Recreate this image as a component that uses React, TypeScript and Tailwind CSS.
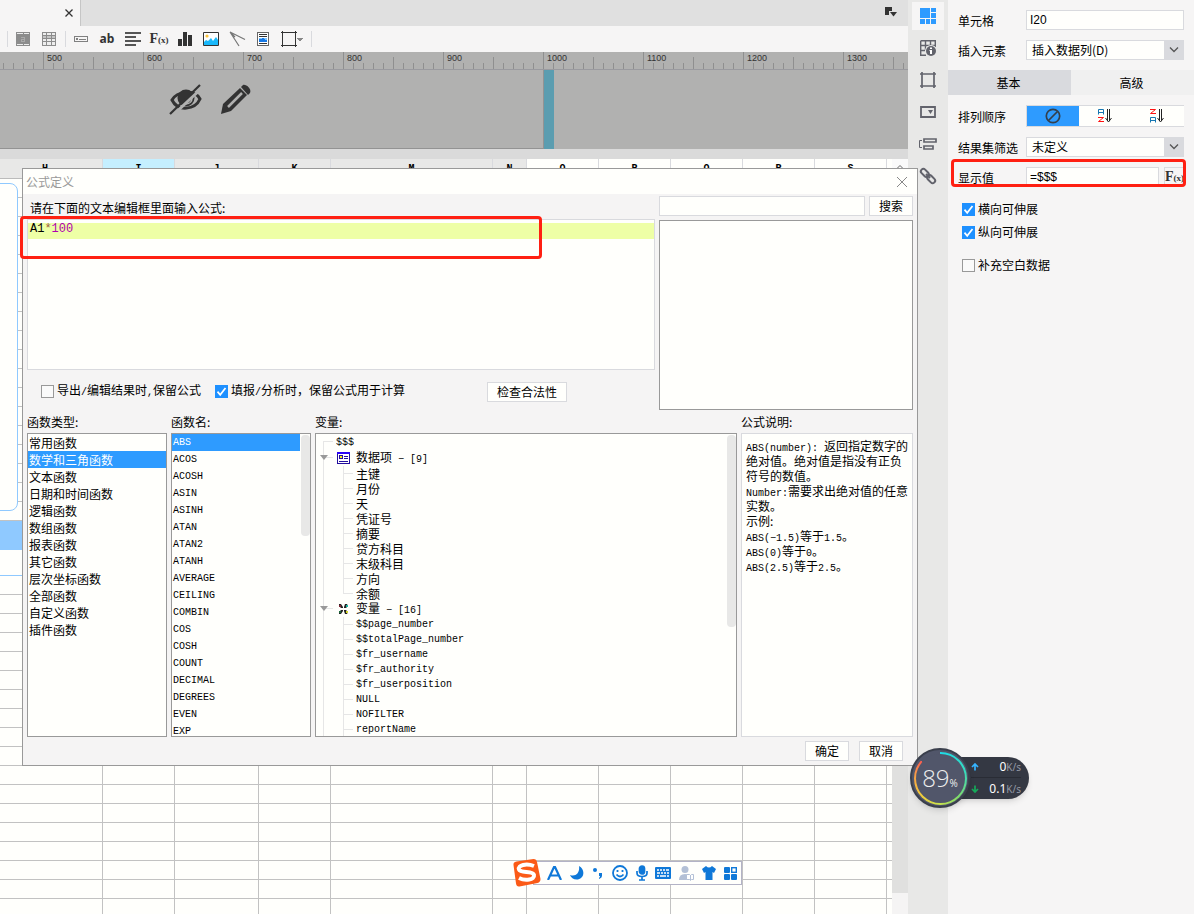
import { useState } from "react";
import type { ReactNode } from "react";

const columns = [
  { name: "H", width: 103, tone: "gray" },
  { name: "I", width: 72, tone: "blue" },
  { name: "J", width: 84, tone: "gray" },
  { name: "K", width: 72, tone: "gray" },
  { name: "M", width: 162, tone: "gray" },
  { name: "N", width: 34, tone: "gray" },
  { name: "O", width: 72, tone: "white" },
  { name: "P", width: 72, tone: "white" },
  { name: "Q", width: 72, tone: "white" },
  { name: "R", width: 72, tone: "white" },
  { name: "S", width: 72, tone: "white" },
  { name: "", width: 5, tone: "white" },
];

const headTone: Record<string, string> = {
  gray: "bg-[#e8e8e7]",
  blue: "bg-[#c5efff]",
  white: "bg-[#fffffc]",
};

const categories = [
  "常用函数", "数学和三角函数", "文本函数", "日期和时间函数", "逻辑函数", "数组函数",
  "报表函数", "其它函数", "层次坐标函数", "全部函数", "自定义函数", "插件函数",
];

const functionNames = [
  "ABS", "ACOS", "ACOSH", "ASIN", "ASINH", "ATAN", "ATAN2", "ATANH", "AVERAGE",
  "CEILING", "COMBIN", "COS", "COSH", "COUNT", "DECIMAL", "DEGREES", "EVEN", "EXP",
];

const dataItems = ["主键", "月份", "天", "凭证号", "摘要", "贷方科目", "末级科目", "方向", "余额"];

const variables = [
  "$$page_number", "$$totalPage_number", "$fr_username", "$fr_authority",
  "$fr_userposition", "NULL", "NOFILTER", "reportName",
];

const rulerMarks = ["", "500", "600", "700", "800", "900", "1000", "1100", "1200", "1300"];
const minorTicks = [10, 20, 30, 40, 60, 70, 80, 90];

function Latin({ children }: { children: ReactNode }) {
  return <span className="whitespace-pre font-['Liberation_Mono',monospace] text-[10px]">{children}</span>;
}

function Check({ label, defaultChecked, children }: { label: string; defaultChecked?: boolean; children?: ReactNode }) {
  return (
    <label className="flex items-center gap-[3px] whitespace-nowrap">
      <span className="grid size-[13px]">
        <input
          type="checkbox"
          aria-label={label}
          defaultChecked={defaultChecked}
          className="peer col-start-1 row-start-1 size-[13px] appearance-none border border-[#999] bg-[#fafafa] checked:border-[#1e90ff] checked:bg-[#1e90ff]"
        />
        <svg viewBox="0 0 13 13" className="pointer-events-none col-start-1 row-start-1 hidden size-[13px] peer-checked:block">
          <path d="M2.500 6.600 5.200 9.800 10.500 3" fill="none" stroke="#fff" strokeWidth="1.700" />
        </svg>
      </span>
      <span>{children ?? label}</span>
    </label>
  );
}

function FxGlyph() {
  return (
    <span className="flex shrink-0 items-baseline leading-none text-[#333]">
      <span className="font-['Liberation_Serif',serif] text-sm font-bold">F</span>
      <span className="font-['Liberation_Serif',serif] text-[9px] font-bold">(x)</span>
    </span>
  );
}

function Separator() {
  return <span className="ml-[3px] mr-[2px] h-4 w-px bg-[#d9dade]" />;
}

function Tool({ label, wide, children }: { label: string; wide?: boolean; children: ReactNode }) {
  return (
    <button aria-label={label} className={`flex h-[26px] items-center justify-center ${wide ? "w-8" : "w-[26px]"}`}>
      {children}
    </button>
  );
}

function Toolbar() {
  return (
    <div className="flex h-[26px] items-center bg-[#f6f5f5] pl-1">
      <Separator />
      <Tool label="合并单元格">
        <svg width="14" height="14" shapeRendering="crispEdges">
          <path d="M0 0h14v14H0z" fill="#8c8c8c" />
          <path d="M1 1h6v1H1zM8 1h5v1H8zM1 12h6v1H1zM8 12h5v1H8z" fill="#ededed" />
          <path d="M5 5h4v5H5V7h3V6H5zM6 9h2V8H6z" fill="#a9a9a9" />
        </svg>
      </Tool>
      <Tool label="拆分单元格">
        <svg width="14" height="14" shapeRendering="crispEdges">
          <path d="M0 0h14v14H0z" fill="#8c8c8c" />
          <path d="M1 1h3v2H1zM5 1h4v2H5zM10 1h3v2h-3zM1 7h3v2H1zM5 7h4v2H5zM10 7h3v2h-3zM1 10h3v3H1zM5 10h4v3H5zM10 10h3v3h-3z" fill="#ededed" />
          <path d="M1 4h3v2H1zM5 4h4v2H5zM10 4h3v2h-3z" fill="#c4c4c4" />
        </svg>
      </Tool>
      <Separator />
      <Tool label="数据列">
        <svg width="14" height="6" shapeRendering="crispEdges" fill="none" stroke="#808080">
          <path d="M.5.5h13v5H.5zM2.5 2.5h1v1h-1zM5 3.5h7" />
        </svg>
      </Tool>
      <Tool label="文本">
        <span className="font-['Noto_Sans',sans-serif] text-xs font-bold leading-4 text-[#333]">ab</span>
      </Tool>
      <Tool label="富文本">
        <svg width="16" height="14" shapeRendering="crispEdges" fill="#555">
          <path d="M0 0h16v2H0zM0 4h11v2H0zM0 8h16v2H0zM0 12h11v2H0z" />
        </svg>
      </Tool>
      <Tool label="公式"><FxGlyph /></Tool>
      <Tool label="图表">
        <svg width="14" height="14" shapeRendering="crispEdges" fill="#333">
          <path d="M0 7h4v7H0zM5 0h4v14H5zM10 3h4v11h-4z" />
        </svg>
      </Tool>
      <Tool label="图片">
        <svg width="16" height="14">
          <path d="M.5.5h15v13H.5z" fill="#fff" stroke="#333" />
          <circle cx="4" cy="4" r="1.6" fill="#f9c23c" />
          <path d="M1 13v-3l2-2 2 1 3-3 2 3 3-4 2 3v5z" fill="#19b8fa" />
        </svg>
      </Tool>
      <Tool label="斜线">
        <svg width="17" height="16" fill="none" stroke="#777" strokeWidth="1.200">
          <path d="M1 1 16 8.5M1 1l9 14M1 1l5 5" />
        </svg>
      </Tool>
      <Tool label="子报表">
        <svg width="12" height="14" shapeRendering="crispEdges">
          <path d="M.5.5h11v13H.5z" fill="#fff" stroke="#666" />
          <path d="M2 2h8v1H2zM2 4h8v1H2zM2 11h8v1H2z" fill="#333" />
          <path d="M2 6h8v4H2z" fill="#1678e5" />
          <path d="M2 6h3v1H2zM7 6h3v2H8z" fill="#7cc4ff" />
        </svg>
      </Tool>
      <Tool label="边框" wide>
        <svg width="22" height="16" shapeRendering="crispEdges" className="shrink-0">
          <path d="M0 1.5h16M0 14.5h16M1.5 0v16M14.5 0v16" stroke="#333" />
          <path d="M16 7h6l-3 4z" fill="#888" />
        </svg>
      </Tool>
      <Separator />
    </div>
  );
}

function Ruler() {
  return (
    <div className="flex h-[18px] overflow-hidden border-b border-[#9a9a9f] bg-[#b1b1b0]">
      <div className="-ml-[57px] flex">
        {rulerMarks.map((mark) => (
          <div key={mark} className="grid w-[100px] shrink-0">
            <svg width="100" height="17" shapeRendering="crispEdges" className="col-start-1 row-start-1" stroke="#8f8f8f">
              <path d="M.5 0v17M50.5 5v12" />
              {minorTicks.map((x) => <path key={x} d={`M${x + 0.5} 11v6`} />)}
            </svg>
            <span className="col-start-1 row-start-1 pl-1 font-['Liberation_Sans',sans-serif] text-[9px] leading-[13px] text-[#333]">{mark}</span>
          </div>
        ))}
      </div>
    </div>
  );
}

function Canvas() {
  return (
    <div className="flex h-[79px] bg-[#b1b1b0]">
      <div className="flex w-[544px] gap-[17px] border-b border-r border-[#939393] pl-[169px] pt-[14px]">
        <button aria-label="隐藏" className="h-8 w-[34px]">
          <svg width="34" height="32" viewBox="0 0 34 32">
            <path d="M3 16C8 7 26 5 31 15 26 26 9 28 3 16Z" fill="none" stroke="#333" strokeWidth="3" />
            <circle cx="17" cy="14" r="8.500" fill="#333" />
            <path d="M17 20c4 0 6-3 6-6" fill="none" stroke="#b1b1b0" strokeWidth="1.500" />
            <path d="M3 32 34 3" stroke="#b1b1b0" strokeWidth="3" />
            <path d="M1 30 31 1" stroke="#333" strokeWidth="2.200" />
          </svg>
        </button>
        <button aria-label="编辑" className="size-8">
          <svg width="32" height="32" viewBox="0 0 32 32" fill="#333">
            <path d="m1 30 2-10L20 4l7 7L11 27Z" />
            <path d="m21 3 2-2c3-1 9 4 7 8l-2 2Z" />
            <path d="m8 23 14-14" stroke="#b1b1b0" strokeWidth="2.500" />
          </svg>
        </button>
      </div>
      <div className="w-[10px] bg-[#5b9db0]" />
    </div>
  );
}

function Sheet() {
  const rows = [
    ...Array.from({ length: 18 }, () => "h-[19px] border-[#c2c2c2] bg-[#fffffc]"),
    "h-[29px] border-[#8fc9ff] bg-[#8fc9ff]",
    "h-[26px] border-[#8fc9ff] bg-[#fffffc]",
    ...Array.from({ length: 18 }, () => "h-[19px] border-[#c2c2c2] bg-[#fffffc]"),
  ];
  return (
    <div className="relative flex min-h-0 flex-1 justify-between overflow-hidden bg-[#fffffc]">
      <table className="h-max w-[892px] table-fixed border-separate border-spacing-0">
        <colgroup>
          {columns.map((c) => <col key={c.name} style={{ width: c.width }} />)}
        </colgroup>
        <thead>
          <tr>
            {columns.map((c) => (
              <th key={c.name} className={`h-5 border-b border-r border-b-[#bbb] border-r-[#d9dade] p-0 font-['Liberation_Mono',monospace] text-[10px] leading-4 text-black last:border-r-0 first:pr-3 ${headTone[c.tone]}`}>
                {c.name}
              </th>
            ))}
          </tr>
        </thead>
        <tbody>
          {rows.map((row, i) => (
            <tr key={i}>
              {columns.map((c) => (
                <td key={c.name} className={`border-b border-r border-r-[#c2c2c2] p-0 last:border-r-0 ${row}`} />
              ))}
            </tr>
          ))}
        </tbody>
      </table>
      <div className="flex w-4 flex-col bg-[#f5f4f4]">
        <svg width="16" height="16" className="bg-[#fafafa]" fill="none" stroke="#666">
          <path d="m4 10.500 4-4 4 4" />
        </svg>
        <div className="mb-[21px] flex-1 bg-[#e0e0df]" />
      </div>
      <div className="absolute -left-2 top-6 h-[328px] w-[26px] rounded-lg border border-[#8fc9ff] bg-[#fffffc]" />
    </div>
  );
}

const sideIcons: { label: string; icon: ReactNode }[] = [
  {
    label: "单元格元素",
    icon: <path d="M0 0h10v10H0zM11 0h5v4h-5zM11 5h5v5h-5zM0 11h5v5H0zM6 11h4v5H6zM11 11h5v5h-5z" fill="#2e9bff" />,
  },
  {
    label: "单元格属性",
    icon: (
      <>
        <path d="M.7.7h14.600V7M.7.7v14.600H6M1 5.500h14M1 10.500h4M5.500 1v9M10.500 1v4" stroke="#62636c" strokeWidth="1.400" fill="none" />
        <circle cx="11" cy="11" r="6" fill="#e8e8e7" />
        <circle cx="11" cy="11" r="5" fill="#62636c" />
        <path d="M10 7.500h2v1.500h-2zM9.500 10h2.500v4h-2v-3h-.5z" fill="#fff" />
      </>
    ),
  },
  {
    label: "悬浮元素",
    icon: <path d="M0 2h16M0 14h16M2 0v16M14 0v16" stroke="#62636c" strokeWidth="1.700" fill="none" />,
  },
  {
    label: "控件设置",
    icon: (
      <>
        <path d="M1 3h14v10H1z" stroke="#62636c" strokeWidth="1.800" fill="none" />
        <path d="M8 6h5l-2.500 4z" fill="#62636c" />
      </>
    ),
  },
  {
    label: "条件属性",
    icon: (
      <>
        <path d="M4 3h12v3H4zM4 10h9v3H4z" stroke="#62636c" strokeWidth="1.700" fill="none" />
        <path d="M2 4.500H-.5v7H2" stroke="#62636c" fill="none" />
      </>
    ),
  },
  {
    label: "超级链接",
    icon: (
      <g fill="none" stroke="#62636c" strokeWidth="2">
        <rect x="-4.500" y="-2.500" width="9" height="5" rx="2.500" transform="translate(4.800 4.800) rotate(45)" />
        <rect x="-4.500" y="-2.500" width="9" height="5" rx="2.500" transform="translate(11.200 11.200) rotate(45)" />
        <path d="m6 6 4 4" />
      </g>
    ),
  },
];

function SideBar() {
  return (
    <nav aria-label="属性面板" className="flex w-10 shrink-0 flex-col items-center gap-1 bg-[#e8e8e7] pt-[2px]">
      {sideIcons.map((s, i) => (
        <button key={s.label} aria-label={s.label} className={`flex h-7 w-8 items-center justify-center ${i === 0 ? "bg-[#f6f5f5]" : ""}`}>
          <svg width="16" height="16" viewBox="0 0 16 16" className="overflow-visible">{s.icon}</svg>
        </button>
      ))}
    </nav>
  );
}

function Chevron() {
  return (
    <span className="pointer-events-none absolute right-0 top-0 flex h-5 w-5 items-center justify-center bg-[#d9dade]">
      <svg width="10" height="6" fill="none" stroke="#555" strokeWidth="1.300"><path d="m1 .5 4 4 4-4" /></svg>
    </span>
  );
}

function Field({ id, label, children }: { id?: string; label: string; children: ReactNode }) {
  return (
    <div className="flex items-center pl-[10px] pr-[10px]">
      {id ? <label htmlFor={id} className="w-[68px] shrink-0 pt-px">{label}</label> : <span className="w-[68px] shrink-0 pt-px">{label}</span>}
      {children}
    </div>
  );
}

function SortIcon({ reverse }: { reverse?: boolean }) {
  const a = "M.5 6.500v-5h5v5M.5 4.500h5";
  const z = "M0 1.500h5.500L.5 5.500H6";
  return (
    <svg width="15" height="16" fill="none">
      <path d={reverse ? z : a} stroke={reverse ? "#f11" : "#1677b3"} />
      <path d={reverse ? a : z} transform="translate(0 8)" stroke={reverse ? "#1677b3" : "#f11"} />
      <path d="M9.500 1v12M11.500 1v12M7.500 10l3 4 3-4" stroke="#222" />
    </svg>
  );
}

function Properties() {
  const selectStyle = "h-5 w-full appearance-none border border-[#d9dade] bg-[#fffffc] pl-[5px] leading-4";
  return (
    <aside className="flex w-[246px] shrink-0 flex-col gap-[10px] bg-[#f6f5f5] pt-[10px]">
      <Field id="cell" label="单元格">
        <input id="cell" defaultValue="I20" className="h-5 w-full min-w-0 border border-[#d9dade] bg-[#fffffc] px-[3px] font-['Liberation_Sans',sans-serif] text-xs" />
      </Field>
      <Field id="element" label="插入元素">
        <div className="relative flex-1">
          <select id="element" className={selectStyle}><option>插入数据列(D)</option></select>
          <Chevron />
        </div>
      </Field>
      <div role="tablist" className="grid h-[25px] grid-cols-2">
        <button role="tab" aria-selected="true" className="bg-[#d9dade] pr-[2px]">基本</button>
        <button role="tab" aria-selected="false" className="bg-[#f0f0f0] pr-[2px]">高级</button>
      </div>
      <Field label="排列顺序">
        <div className="grid h-[22px] flex-1 grid-cols-3 border-y border-l border-[#d9dade] bg-[#fffffc]">
          <button aria-label="不排序" className="flex items-center justify-center bg-[#2e9bff]">
            <svg width="16" height="16" fill="none" stroke="#333f4c" strokeWidth="1.700"><circle cx="8" cy="8" r="6.700" /><path d="M3.500 12.500 12.500 3.500" /></svg>
          </button>
          <button aria-label="升序" className="flex items-center justify-center"><SortIcon /></button>
          <button aria-label="降序" className="flex items-center justify-center"><SortIcon reverse /></button>
        </div>
      </Field>
      <Field id="filter" label="结果集筛选">
        <div className="relative flex-1">
          <select id="filter" className={selectStyle}><option>未定义</option></select>
          <Chevron />
        </div>
      </Field>
      <div className="relative">
        <Field id="display" label="显示值">
          <input id="display" defaultValue="=$$$" className="h-5 min-w-0 flex-1 border border-[#d9dade] bg-[#fffffc] px-[3px] font-['Liberation_Sans',sans-serif] text-xs" />
          <button aria-label="编辑公式" className="ml-[5px] flex h-5 w-5 items-center justify-center border-y border-l border-[#d9dade]"><FxGlyph /></button>
        </Field>
        <div className="pointer-events-none absolute -top-2 bottom-0 left-[3px] right-2 rounded border-[3px] border-[#ff2012]" />
      </div>
      <div className="flex flex-col gap-[7px] pl-[14px] pt-1">
        <Check label="横向可伸展" defaultChecked />
        <Check label="纵向可伸展" defaultChecked />
        <div className="mt-[10px]"><Check label="补充空白数据" /></div>
      </div>
    </aside>
  );
}

function Branch({ last, root, parent }: { last?: boolean; root?: boolean; parent?: boolean }) {
  if (root) {
    return <svg width="20" height="16" className="shrink-0" stroke="#e6e6e6" fill="none" shapeRendering="crispEdges"><path d="M7.500 16V7.500H17" /></svg>;
  }
  if (parent) {
    return (
      <svg width="20" height="16" className="shrink-0" shapeRendering="crispEdges">
        <path d="M7.500 0v16M7 7.500h10" stroke="#e6e6e6" />
        <path d="M4 5h8l-4 5z" fill="#999" shapeRendering="auto" />
      </svg>
    );
  }
  return (
    <svg width="40" height="15" className="shrink-0" stroke="#e6e6e6" fill="none" shapeRendering="crispEdges">
      <path d={last ? "M7.500 0v15M27.500 0v7.500H37" : "M7.500 0v15M27.500 0v15M27 7.500h10"} />
    </svg>
  );
}

function VariableTree() {
  return (
    <div className="flex min-w-0 border border-[#999] bg-[#fffffc]">
      <ul role="tree" className="min-w-0 flex-1 overflow-hidden leading-[15px]">
        <li role="treeitem" className="flex h-4 items-center"><Branch root /><Latin>$$$</Latin></li>
        <li role="treeitem" className="flex h-4 items-center">
          <Branch parent />
          <svg width="20" height="14" shapeRendering="crispEdges">
            <path d="M1.500 1.500h12v11h-12z" fill="#fff" stroke="#210d9e" />
            <path d="M1 1h13v2H1z" fill="#2b05f5" />
            <path d="M3.500 4.500h3v3h-3z" fill="#f4ee19" stroke="#210d9e" />
            <path d="M8 5h4v1H8zM8 7h4v1H8zM3 10h9v1H3z" fill="#210d9e" />
          </svg>
          <span>数据项<Latin>{" − [9]"}</Latin></span>
        </li>
        {dataItems.map((d, i) => (
          <li role="treeitem" key={d} className="flex h-[15px] items-center"><Branch last={i === dataItems.length - 1} />{d}</li>
        ))}
        <li role="treeitem" className="flex h-4 items-center">
          <Branch parent />
          <svg width="20" height="14">
            <path d="M3 2h2l2 3v1H5L3 4zM11 2H9L8 5v1h2l2-2zM3 12h2l2-3V8H5L3 10zM11 12H9L8 9V8h2l2 2z" fill="#222" />
            <path d="M10 3h2v2h-2z" fill="#18b3a2" /><path d="M10 9h2v2h-2z" fill="#d5d52a" /><path d="M3 3h2v2H3z" fill="#7a2432" /><path d="M3 9h2v2H3z" fill="#1c6b3c" />
          </svg>
          <span>变量<Latin>{" − [16]"}</Latin></span>
        </li>
        {variables.map((v) => (
          <li role="treeitem" key={v} className="flex h-[15px] items-center"><Branch /><Latin>{v}</Latin></li>
        ))}
      </ul>
      <div className="mt-px h-48 w-[9px] rounded bg-[#e8e8e7]" />
    </div>
  );
}

function FormulaDialog() {
  const [category, setCategory] = useState("数学和三角函数");
  const [fn, setFn] = useState("ABS");
  const button = "flex h-5 items-center justify-center border border-[#d9dade] bg-[#fffffc]";
  return (
    <section role="dialog" aria-labelledby="dialog-title" className="absolute left-[22px] top-[168px] w-[896px] border border-[#999] bg-[#f5f4f4]">
      <header className="flex h-[25px] items-center justify-between bg-[#fffffc] pl-[3px] pr-[9px]">
        <h2 id="dialog-title" className="text-[#999]">公式定义</h2>
        <button aria-label="关闭">
          <svg width="12" height="12" stroke="#888" fill="none"><path d="m1 1 10 10M11 1 1 11" /></svg>
        </button>
      </header>
      <div className="px-1 pb-1 pt-[2px]">
        <div className="flex gap-1">
          <div className="min-w-0 flex-1">
            <div id="editor-label" className="flex h-[23px] items-center pl-[3px]">请在下面的文本编辑框里面输入公式:</div>
            <div className="relative">
              <div role="textbox" aria-multiline="true" aria-labelledby="editor-label" contentEditable suppressContentEditableWarning spellCheck={false}
                className="h-[151px] border border-[#d9dade] bg-[#fffffc] pt-[3px] font-['Liberation_Mono',monospace] text-xs outline-none">
                <div className="h-4 bg-[#eeffa6] pl-[2px] leading-[12px]">A1<span className="text-[#a06040]">*</span><span className="text-[#b000b0]">100</span></div>
              </div>
              <div className="pointer-events-none absolute -left-[7px] -top-[3px] h-[43px] w-[522px] rounded border-[3px] border-[#ff2012]" />
            </div>
            <div className="flex h-10 items-center gap-[14px] pl-[14px] pt-[3px]">
              <Check label="导出/编辑结果时,保留公式">导出<Latin>/</Latin>编辑结果时<Latin>,</Latin>保留公式</Check>
              <Check label="填报/分析时，保留公式用于计算" defaultChecked>填报<Latin>/</Latin>分析时，保留公式用于计算</Check>
              <button className={`${button} ml-auto mr-[88px] w-20`}>检查合法性</button>
            </div>
          </div>
          <div className="flex w-[254px] flex-col gap-1">
            <div className="flex gap-1">
              <input aria-label="搜索函数" className="h-5 min-w-0 flex-1 border border-[#d9dade] bg-[#fffffc] px-1" />
              <button className={`${button} w-11`}>搜索</button>
            </div>
            <div className="flex-1 border border-[#999] bg-[#fffffc]" />
          </div>
        </div>
        <div className="grid grid-cols-[140px_140px_1fr_172px] grid-rows-[23px_304px] gap-x-1">
          {["函数类型:", "函数名:", "变量:", "公式说明:"].map((t) => (
            <div key={t} className="flex items-center">{t}</div>
          ))}
          <ul className="border border-[#999] bg-[#fffffc]">
            {categories.map((c) => (
              <li key={c}>
                <button onClick={() => setCategory(c)} className={`block h-[17px] w-full pl-px text-left leading-[17px] ${c === category ? "bg-[#2e9bff] text-white" : ""}`}>{c}</button>
              </li>
            ))}
          </ul>
          <div className="flex min-h-0 border border-[#999] bg-[#fffffc]">
            <ul className="flex-1 overflow-hidden">
              {functionNames.map((f) => (
                <li key={f}>
                  <button onClick={() => setFn(f)} className={`flex h-[17px] w-full items-center pl-px pt-px text-left font-['Liberation_Mono',monospace] text-[10px] ${f === fn ? "bg-[#2e9bff] text-white" : ""}`}>{f}</button>
                </li>
              ))}
            </ul>
            <div className="ml-px mt-px h-[101px] w-[9px] rounded bg-[#e8e8e7]" />
          </div>
          <VariableTree />
          <div className="overflow-hidden whitespace-nowrap border border-[#d9dade] bg-[#fffffc] pl-1 pt-1 leading-[15px]">
            {[
              <><Latin>{"ABS(number): "}</Latin>返回指定数字的</>,
              <>绝对值。绝对值是指没有正负</>,
              <>符号的数值。</>,
              <><Latin>Number:</Latin>需要求出绝对值的任意</>,
              <>实数。</>,
              <>示例:</>,
              <><Latin>ABS(−1.5)</Latin>等于<Latin>1.5</Latin>。</>,
              <><Latin>ABS(0)</Latin>等于<Latin>0</Latin>。</>,
              <><Latin>ABS(2.5)</Latin>等于<Latin>2.5</Latin>。</>,
            ].map((line, i) => <div key={i} className="h-[15px]">{line}</div>)}
          </div>
        </div>
        <footer className="flex justify-end gap-[10px] pr-[10px] pt-1">
          <button className={`${button} w-11`}>确定</button>
          <button className={`${button} w-11`}>取消</button>
        </footer>
      </div>
    </section>
  );
}

function ImeBar() {
  return (
    <div className="absolute left-[512px] top-[859px] flex items-center">
      <svg width="29" height="28" viewBox="0 0 28 28" className="z-10">
        <path d="M1 6Q.5 3 4 2.500L21 0q3 0 3.500 3L28 20q0 3-3 4L7 27.500q-3 .5-3.500-3Z" fill="#fb5a17" />
        <path d="M21.500 7C14 4 5 6 6.500 10.500c1.500 4 14 1 15 5.500 1 5-9 6-15 3" fill="none" stroke="#fff" strokeWidth="4" />
      </svg>
      <div className="-ml-2 flex h-6 w-[209px] items-center justify-between border border-[#b3b3c6] bg-[#fffffc] pl-[13px] pr-1 text-[#0f78d8]">
        <svg width="15" height="14" fill="none" stroke="currentColor" strokeWidth="2.200"><path d="M1 14 7 1h1l6 13M3.500 9.500h8" /></svg>
        <svg width="14" height="14" fill="currentColor"><path d="M9 0c6 3 6 12-1 13.500C4 14 1 12 0 9c6 2 10-2 9-9Z" /></svg>
        <svg width="12" height="14" fill="currentColor"><circle cx="3" cy="4" r="2" /><path d="M7 7h3v3q0 2-3 3v-1q1-1 1-2H7z" /></svg>
        <svg width="16" height="16" fill="none" stroke="currentColor" strokeWidth="1.800"><circle cx="8" cy="8" r="7" /><path d="M5.500 5v2M10.500 5v2M4.500 9.500q3.500 4 7 0" /></svg>
        <svg width="12" height="16" fill="none" stroke="currentColor" strokeWidth="1.700"><rect x="3.500" y="1" width="5" height="8" rx="2.500" fill="currentColor" /><path d="M1 6v2q0 3.500 5 3.500T11 8V6M6 12v3M3 15h6" /></svg>
        <svg width="16" height="12"><rect width="16" height="12" rx="1" fill="currentColor" /><path d="M2 3h2M5 3h2M8 3h2M11 3h3M2 6h3M6 6h2M9 6h2M12 6h2M2 9h2M5 9h6M12 9h2" stroke="#fff" strokeWidth="1.500" /></svg>
        <svg width="15" height="15"><circle cx="6" cy="3.500" r="3.500" fill="#b3c0d6" /><path d="M0 14q0-6 6-6t6 6z" fill="#b3c0d6" /><path d="M7.500 8.500h3l1 1 1-1h2v5h-2l-1 1-1-1h-3zM11.500 9v5" fill="#fff" stroke="#b3c0d6" /></svg>
        <svg width="14" height="14" fill="currentColor"><path d="M4 0q3 3 6 0l4 3-2 4-1.500-1v8h-7V6L2 7 0 3Z" /></svg>
        <svg width="13" height="13" fill="currentColor"><rect width="6" height="6" rx="1" /><rect y="7" width="6" height="6" rx="1" /><rect x="7" y="7" width="6" height="6" rx="1" /><rect x="7.700" y=".7" width="4.600" height="4.600" fill="none" stroke="currentColor" strokeWidth="1.400" /></svg>
      </div>
    </div>
  );
}

function SpeedMeter() {
  const rates: [string, string, string][] = [
    ["M4 7.500V1M1 4l3-3 3 3", "#35b4ff", "0"],
    ["M4 .5V7M1 4l3 3 3-3", "#16a95a", "0.1"],
  ];
  return (
    <div className="absolute left-[910px] top-[748px] flex items-center">
      <div className="z-10 grid size-[60px] place-items-center rounded-full border-2 border-[#3a3f4c] bg-[#51566a] shadow-md">
        <div className="col-start-1 row-start-1 size-[53px] rounded-full bg-[conic-gradient(#1edce8_0%,#35dcc0_20%,#7fdc6a_38%,#cfe04a_52%,#f2c83c_65%,#f79a48_78%,#fb5a50_87%,#51566a_87%)] p-[2px]">
          <div className="size-full rounded-full bg-[#51566a]" />
        </div>
        <div className="col-start-1 row-start-1 flex items-baseline text-[#eee]">
          <span className="font-['Open_Sans',sans-serif] text-2xl font-light leading-8">89</span>
          <span className="font-['Open_Sans',sans-serif] text-[10px]">%</span>
        </div>
      </div>
      <div className="-ml-5 grid h-[42px] w-[79px] grid-rows-2 rounded-r-full bg-[#343843] pl-[21px] pr-2 font-['Noto_Sans',sans-serif] shadow-md">
        {rates.map(([path, color, value], i) => (
          <div key={value} className={`flex items-center justify-between ${i === 0 ? "border-b border-[#292c35]" : ""}`}>
            <svg width="8" height="8" fill="none" stroke={color} strokeWidth="1.700"><path d={path} /></svg>
            <span className="text-xs leading-5 text-white">{value}<span className="text-[10px] text-[#9599a5]">K/s</span></span>
          </div>
        ))}
      </div>
    </div>
  );
}

export default function App() {
  return (
    <div className="relative flex h-screen overflow-hidden font-['Noto_Sans_CJK_SC',sans-serif] text-xs leading-4 text-black">
      <main className="flex min-w-0 flex-1 flex-col">
        <div className="flex h-[26px] items-start justify-between bg-[#e0e0e0]">
          <div className="flex h-full w-[81px] items-center justify-end border-r border-[#c6c6c6] bg-[#f6f5f5] pr-[7px]">
            <button aria-label="关闭标签">
              <svg width="8" height="8" stroke="#333" strokeWidth="1.300"><path d="m.5.5 7 7M7.500.5l-7 7" /></svg>
            </button>
          </div>
          <button aria-label="标签列表" className="mr-[11px] mt-[7px]">
            <svg width="12" height="10" fill="#333"><path d="M0 0h7v4H4v4H0z" /><path d="M5 5h7l-3.500 4.500z" /></svg>
          </button>
        </div>
        <Toolbar />
        <Ruler />
        <Canvas />
        <div className="h-[10px] bg-[#dadada]" />
        <Sheet />
      </main>
      <SideBar />
      <Properties />
      <FormulaDialog />
      <ImeBar />
      <SpeedMeter />
    </div>
  );
}
